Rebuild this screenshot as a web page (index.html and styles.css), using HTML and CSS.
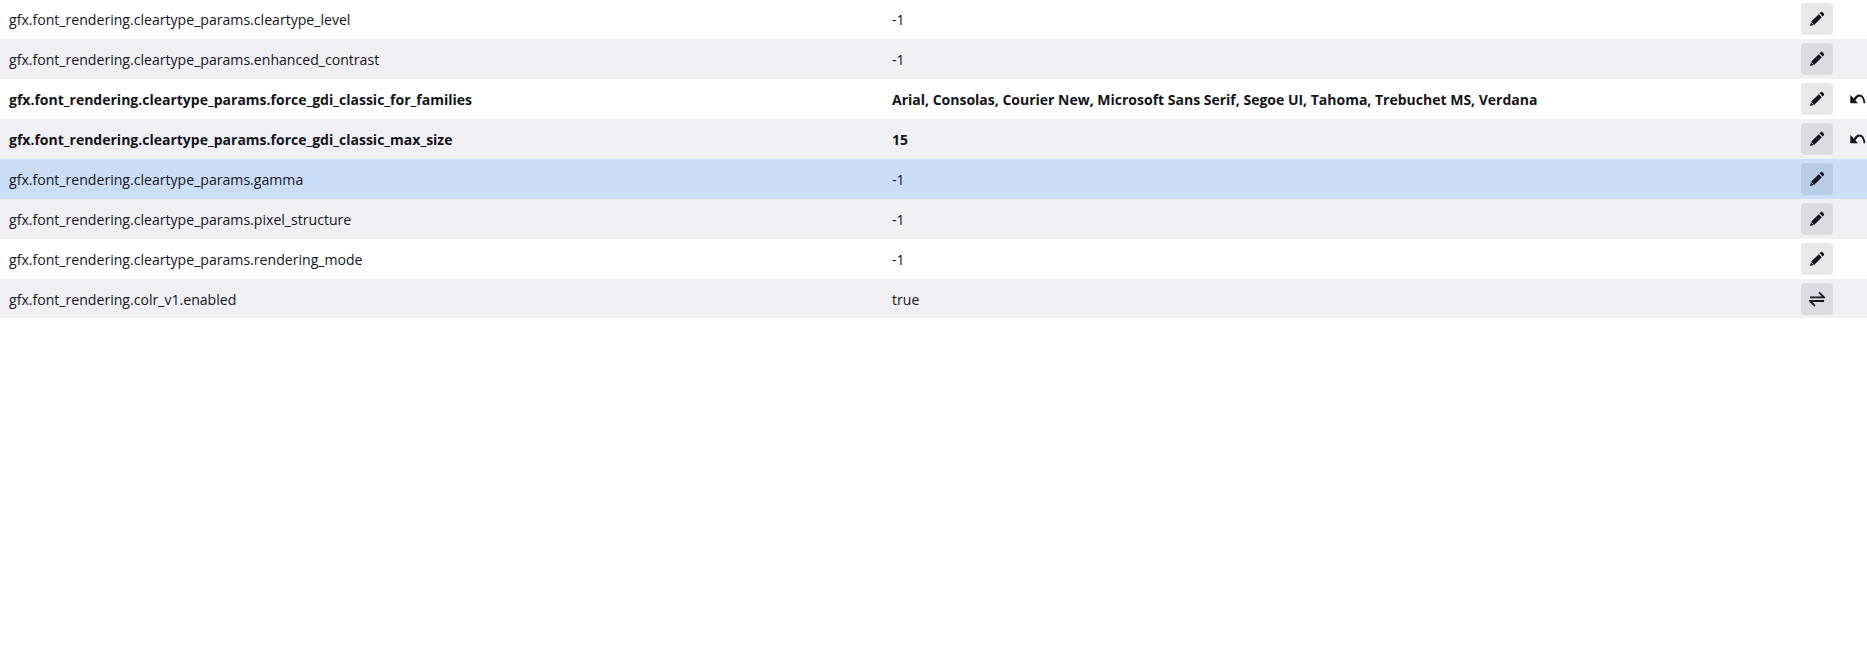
FILE: index.html
```html
<!DOCTYPE html>
<html lang="en">
<head>
<meta charset="utf-8">
<title>Advanced Preferences</title>
<link rel="stylesheet" href="styles.css">
</head>
<body>
<svg class="defs" width="0" height="0" aria-hidden="true">
  <symbol id="pencil" viewBox="0 0 16 16"><path d="M10.6 2.3l1-1c.6-.6 1.4-.6 2 0l1.1 1.1c.6.6.6 1.4 0 2l-1 1zM9.7 3.2l3.1 3.1-7.6 7.6-3.1-3.1zM1.9 11.5l2.6 2.6L1 15z" fill="currentColor"/></symbol>
  <symbol id="toggle" viewBox="0 0 16 16"><path d="M1 6.3H15L10 1.3M15 10H1l5 5" fill="none" stroke="currentColor" stroke-width="1.8"/></symbol>
  <symbol id="reset" viewBox="0 0 16 16"><path d="M.3 4v8.2H8L5.4 9.6C6.5 8.2 7.8 5.6 9.5 5.6c2.5 0 3.8 3 4 6.6h1.8C15 7.5 13 3.5 9.5 3.5 7 3.5 5 5.5 3.9 7.6z" fill="currentColor"/></symbol>
</svg>
<main class="prefs">
  <div class="row"><div class="name">gfx.font_rendering.cleartype_params.cleartype_level</div><div class="value">-1</div><button class="act"><svg class="ico"><use href="#pencil"/></svg></button><div class="undo"></div></div>
  <div class="row alt"><div class="name">gfx.font_rendering.cleartype_params.enhanced_contrast</div><div class="value">-1</div><button class="act"><svg class="ico"><use href="#pencil"/></svg></button><div class="undo"></div></div>
  <div class="row changed"><div class="name">gfx.font_rendering.cleartype_params.force_gdi_classic_for_families</div><div class="value">Arial, Consolas, Courier New, Microsoft Sans Serif, Segoe UI, Tahoma, Trebuchet MS, Verdana</div><button class="act"><svg class="ico"><use href="#pencil"/></svg></button><div class="undo"><svg class="ico"><use href="#reset"/></svg></div></div>
  <div class="row alt changed"><div class="name">gfx.font_rendering.cleartype_params.force_gdi_classic_max_size</div><div class="value">15</div><button class="act"><svg class="ico"><use href="#pencil"/></svg></button><div class="undo"><svg class="ico"><use href="#reset"/></svg></div></div>
  <div class="row hover"><div class="name">gfx.font_rendering.cleartype_params.gamma</div><div class="value">-1</div><button class="act"><svg class="ico"><use href="#pencil"/></svg></button><div class="undo"></div></div>
  <div class="row alt"><div class="name">gfx.font_rendering.cleartype_params.pixel_structure</div><div class="value">-1</div><button class="act"><svg class="ico"><use href="#pencil"/></svg></button><div class="undo"></div></div>
  <div class="row"><div class="name">gfx.font_rendering.cleartype_params.rendering_mode</div><div class="value">-1</div><button class="act"><svg class="ico"><use href="#pencil"/></svg></button><div class="undo"></div></div>
  <div class="row alt"><div class="name">gfx.font_rendering.colr_v1.enabled</div><div class="value">true</div><button class="act"><svg class="ico"><use href="#toggle"/></svg></button><div class="undo"></div></div>
</main>
</body>
</html>
```
FILE: styles.css
```css
* { box-sizing: border-box; }
html, body { margin: 0; background: #fff; }
body { height: 648px; overflow: hidden; font-family: "Open Sans", "Noto Sans", sans-serif; font-size: 14.1px; color: #15141a; }
.defs { position: absolute; }
.prefs { display: flex; flex-direction: column; height: 319px; margin-top: -1px; overflow: hidden; }
.row { display: grid; flex: none; grid-template-columns: 883px 1fr 32px 34px; height: 40px; align-items: center; padding-left: 9px; background: #fff; }
.row.alt { background: #f0f0f4; }
.row.hover { background: #cbdef7; }
.row.changed { font-weight: 700; font-size: 14px; }
.name, .value { white-space: nowrap; }
.act { width: 32px; height: 32px; border: 0; border-radius: 4px; padding: 0; display: flex; align-items: center; justify-content: center; background: #e8e8e8; color: #15141a; }
.alt .act { background: #dcdce0; }
.hover .act { background: #b7cce6; }
.ico { display: block; width: 16px; height: 16px; }
.undo { display: flex; align-items: center; padding-left: 17px; }
```
